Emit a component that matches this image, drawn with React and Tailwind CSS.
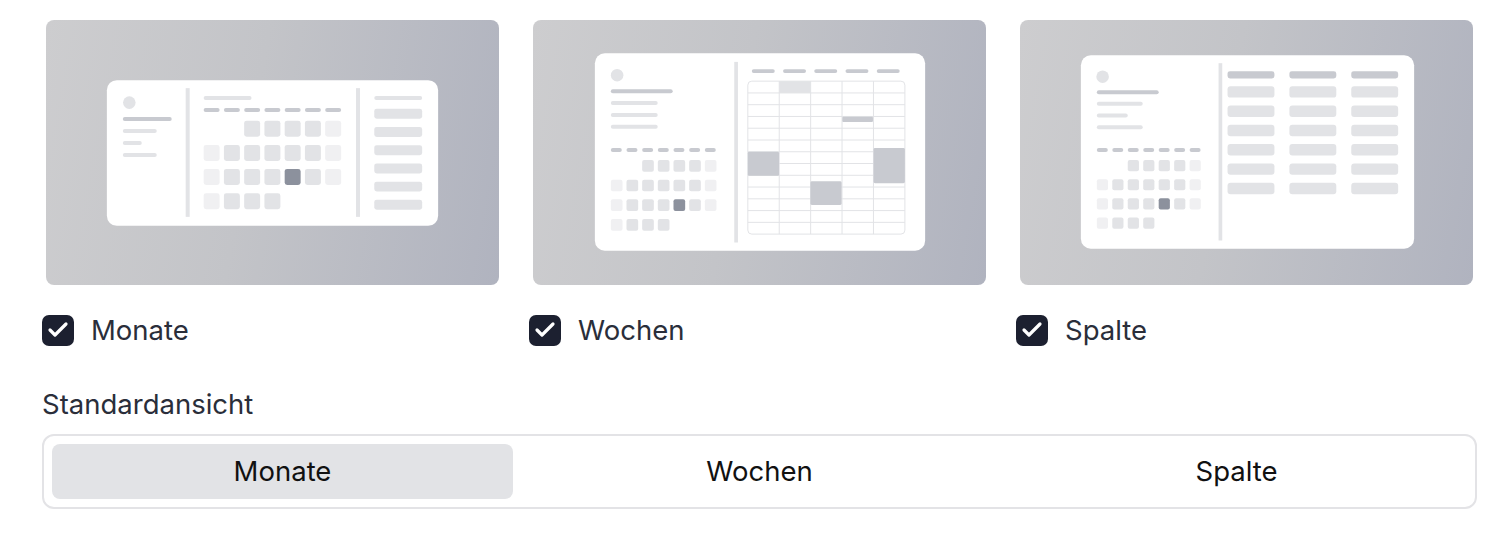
import React, { useState } from 'react';
import { Check } from 'lucide-react';

const MID = '#e2e3e6';
const LIGHT = '#f0f0f2';
const DARK = '#8c919d';
const BAR = '#c8cad0';

// mini month grid pattern shared by all three thumbnails
const GRID = [
    [null, null, MID, MID, MID, MID, LIGHT],
    [LIGHT, MID, MID, MID, MID, MID, LIGHT],
    [LIGHT, MID, MID, MID, DARK, MID, LIGHT],
    [LIGHT, MID, MID, MID, null, null, null],
];

function MiniMonth({ x, y, dx, dy, size, rx }) {
    return GRID.map((row, r) =>
        row.map((fill, c) =>
            fill ? (
                <rect
                    key={`${r}-${c}`}
                    x={x + c * dx}
                    y={y + r * dy}
                    width={size}
                    height={size}
                    rx={rx}
                    fill={fill}
                />
            ) : null
        )
    );
}

function Dashes({ x, y, dx, w, count, h = 4, fill = BAR }) {
    return Array.from({ length: count }).map((_, i) => (
        <rect key={i} x={x + i * dx} y={y} width={w} height={h} rx={h / 2} fill={fill} />
    ));
}

function SideInfo({ cx, cy, x, y, widths, pitch }) {
    return (
        <>
            <circle cx={cx} cy={cy} r={6.3} fill={MID} />
            {widths.map((w, i) => (
                <rect key={i} x={x} y={y + i * pitch} width={w} height={4} rx={2} fill={i === 0 ? BAR : MID} />
            ))}
        </>
    );
}

function MonthThumb() {
    return (
        <svg viewBox="0 0 454 265" className="w-full h-full">
            <rect x={61} y={60} width={332} height={146} rx={10} fill="#fff" />
            <SideInfo cx={83.5} cy={82.5} x={77} y={97} widths={[49, 34, 19, 34]} pitch={12} />
            <rect x={140} y={68} width={4} height={129} fill={MID} />
            <rect x={158} y={76} width={48} height={4} rx={2} fill={MID} />
            <Dashes x={158} y={88} dx={20.3} w={16} count={7} />
            <MiniMonth x={158} y={100.7} dx={20.3} dy={24.2} size={16} rx={2.5} />
            <rect x={310.7} y={68} width={4} height={129} fill={MID} />
            <rect x={329} y={76} width={48} height={4} rx={2} fill={MID} />
            {Array.from({ length: 6 }).map((_, i) => (
                <rect key={i} x={329} y={88.7 + i * 18.25} width={48} height={10} rx={2.5} fill={MID} />
            ))}
        </svg>
    );
}

function WeekThumb() {
    const tx = 215.3;
    const ty = 61;
    const cw = 31.48;
    const rh = 153.3 / 13;
    return (
        <svg viewBox="0 0 454 265" className="w-full h-full">
            <rect x={62} y={33} width={331} height={198} rx={10} fill="#fff" />
            <SideInfo cx={84.3} cy={55} x={78} y={69} widths={[62, 47, 47, 47]} pitch={11.9} />
            <Dashes x={78} y={128} dx={15.7} w={11} count={7} />
            <MiniMonth x={78} y={140} dx={15.7} dy={19.7} size={11.7} rx={2} />
            <rect x={201.7} y={41.7} width={3.7} height={181} fill={MID} />
            <Dashes x={219.3} y={49} dx={31.3} w={23} count={5} h={3.7} />
            {/* table lines */}
            {Array.from({ length: 12 }).map((_, i) => (
                <line key={`h${i}`} x1={tx} x2={tx + cw * 5} y1={ty + (i + 1) * rh} y2={ty + (i + 1) * rh} stroke={MID} strokeWidth={1} />
            ))}
            {Array.from({ length: 4 }).map((_, i) => (
                <line key={`v${i}`} x1={tx + (i + 1) * cw} x2={tx + (i + 1) * cw} y1={ty} y2={ty + 153.3} stroke={MID} strokeWidth={1} />
            ))}
            <rect x={tx} y={ty} width={cw * 5} height={153.3} rx={4} fill="none" stroke={MID} strokeWidth={1} />
            {/* events sit on top of the grid */}
            <rect x={tx + cw} y={ty} width={cw} height={rh} fill={MID} />
            <rect x={310} y={96.7} width={30.7} height={5.3} rx={1} fill={BAR} />
            <rect x={tx} y={131.7} width={31.3} height={24} rx={1.5} fill={BAR} />
            <rect x={278} y={161.3} width={31.3} height={23.7} rx={1.5} fill={BAR} />
            <rect x={341.3} y={128} width={31.4} height={35.3} rx={1.5} fill={BAR} />
        </svg>
    );
}

function ColumnThumb() {
    const cols = [208, 270, 332];
    return (
        <svg viewBox="0 0 454 265" className="w-full h-full">
            <rect x={61} y={35} width={334} height={194} rx={10} fill="#fff" />
            <SideInfo cx={82.8} cy={56.5} x={77} y={70} widths={[62, 46, 31, 46]} pitch={11.7} />
            <Dashes x={77} y={128} dx={15.5} w={11} count={7} />
            <MiniMonth x={77} y={140} dx={15.5} dy={19.2} size={11.2} rx={2} />
            <rect x={199} y={43} width={3.7} height={177.7} fill={MID} />
            {cols.map((x) => (
                <g key={x}>
                    <rect x={x} y={51} width={47} height={7.3} rx={2.5} fill={BAR} />
                    {Array.from({ length: 6 }).map((_, i) => (
                        <rect key={i} x={x} y={66 + i * 19.35} width={47} height={11.5} rx={3} fill={MID} />
                    ))}
                </g>
            ))}
        </svg>
    );
}

const VIEWS = [
    { id: 'month', label: 'Monate', Thumb: MonthThumb },
    { id: 'week', label: 'Wochen', Thumb: WeekThumb },
    { id: 'column', label: 'Spalte', Thumb: ColumnThumb },
];

export default function App() {
    const [enabled, setEnabled] = useState({ month: true, week: true, column: true });
    const [defaultView, setDefaultView] = useState('month');

    const toggle = (id) => setEnabled((prev) => ({ ...prev, [id]: !prev[id] }));

    return (
        <div className="bg-white min-h-screen pl-[42px] pt-4 font-['Inter','Noto_Sans',sans-serif]">
            <div className="w-[1435px]">
                <div className="grid grid-cols-3 gap-[26px]">
                    {VIEWS.map(({ id, label, Thumb }) => (
                        <div key={id}>
                            <div className="p-1">
                                <div className="h-[265px] rounded-lg overflow-hidden bg-[linear-gradient(100deg,#cdcdcf_0%,#c3c4c8_45%,#b0b3bf_100%)]">
                                    <Thumb />
                                </div>
                            </div>
                            <label className="mt-[25px] flex items-center gap-[17px] cursor-pointer" onClick={() => toggle(id)}>
                                <span
                                    className={`flex h-[31px] w-[32px] items-center justify-center rounded-[7px] ${
                                        enabled[id] ? 'bg-[#1c2030]' : 'border-2 border-[#c9cbd1] bg-white'
                                    }`}
                                >
                                    {enabled[id] && <Check size={24} strokeWidth={3.2} className="text-white" />}
                                </span>
                                <span className="text-[27.5px] leading-8 text-[#2a2e3a]">{label}</span>
                            </label>
                        </div>
                    ))}
                </div>

                <div className="mt-[42px] text-[27.5px] leading-8 text-[#2a2e3a]">Standardansicht</div>

                <div className="mt-[14px] grid grid-cols-3 gap-4 rounded-xl border-2 border-[#e3e3e6] p-2">
                    {VIEWS.map(({ id, label }) => (
                        <button
                            key={id}
                            type="button"
                            onClick={() => setDefaultView(id)}
                            className={`h-[55px] rounded-lg text-[27.5px] text-[#111] ${
                                defaultView === id ? 'bg-[#e2e3e6]' : 'bg-transparent'
                            }`}
                        >
                            {label}
                        </button>
                    ))}
                </div>
            </div>
        </div>
    );
}
